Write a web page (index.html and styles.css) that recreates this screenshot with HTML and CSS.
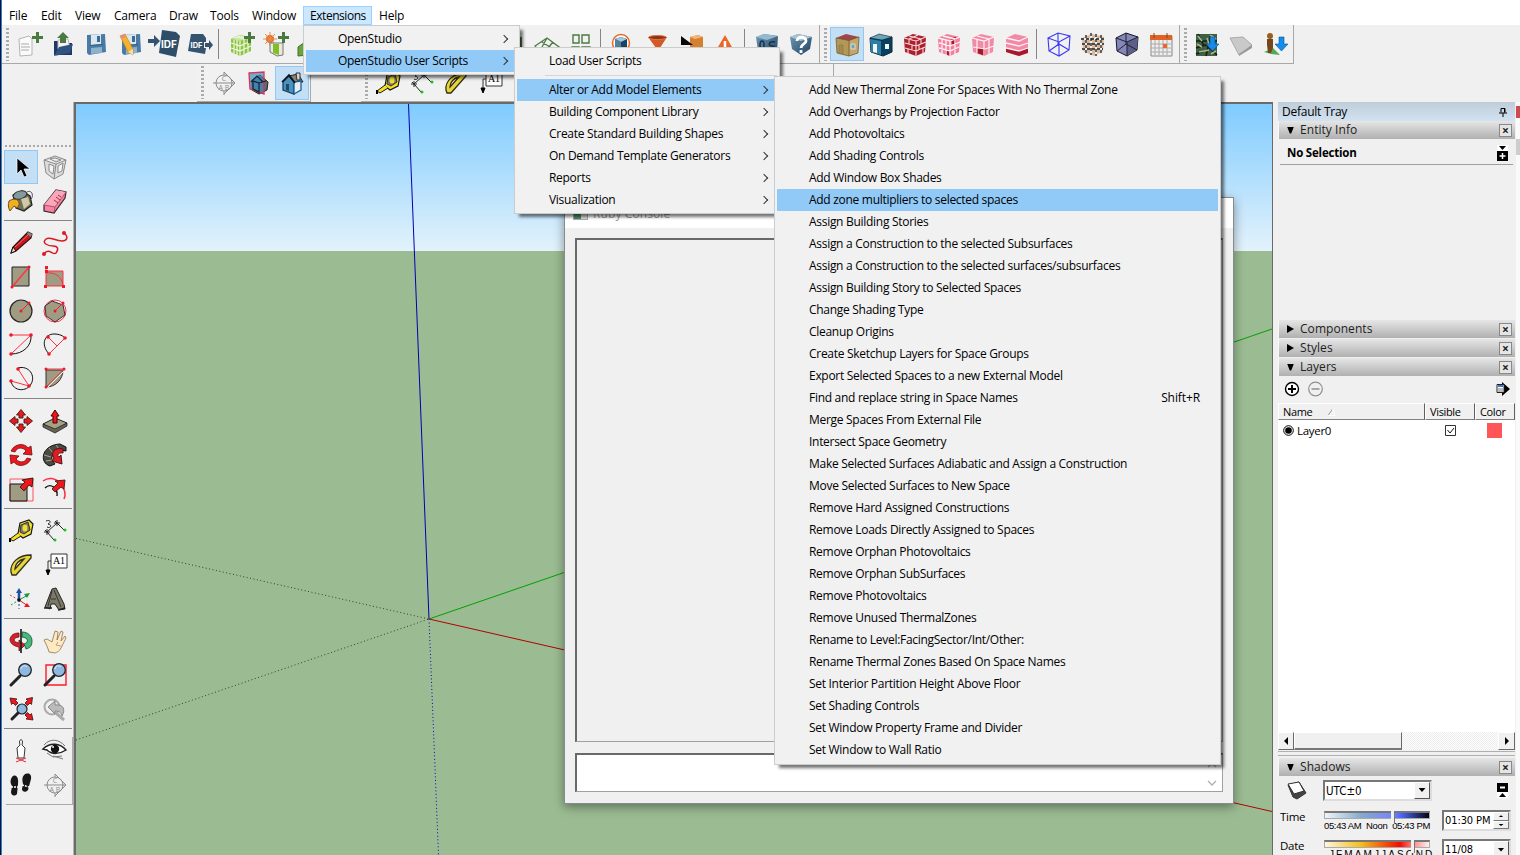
FILE: index.html
```html
<!DOCTYPE html>
<html lang="en">
<head>
<meta charset="utf-8">
<title>Model editor</title>
<link rel="stylesheet" href="styles.css">
</head>
<body>
<svg class="defs" width="0" height="0">
  <defs>
    <linearGradient id="steel" x1="0" y1="0" x2="1" y2="1"><stop offset="0" stop-color="#6f9cb9"/><stop offset="1" stop-color="#1f3f5c"/></linearGradient>
    <symbol id="plus" viewBox="0 0 28 28"><path d="M21 2h3v4h4v3h-4v4h-3V9h-4V6h4z" fill="#4a7a40"/></symbol>
    <symbol id="new" viewBox="0 0 28 28"><path d="M4 9l10-3 3 3v16l-12 1z" fill="#fafafa" stroke="#b5b5b5"/><path d="M6 14h8M6 17h9M6 20h8" stroke="#aaa"/><use href="#plus"/></symbol>
    <symbol id="open" viewBox="0 0 28 28"><path d="M5 11h4l2 2h12v12H5z" fill="#1f3864"/><path d="M9 10l10-1 2 10H9z" fill="#f4f4f4" stroke="#bbb"/><path d="M5 26l5-9 14-3-3 9z" fill="#305482"/><path d="M14 2l6 6h-3v5h-6V8H8z" fill="#4a7a40"/></symbol>
    <symbol id="save" viewBox="0 0 28 28"><path d="M4 5l18-1 1 18-17 3-2-2z" fill="#4a7ba5"/><path d="M8 5l10-1v10l-10 1z" fill="#dbe7ef"/><path d="M14 6h3v6h-3z" fill="#3c6a92"/><path d="M8 18l11-1v6l-11 1z" fill="#8fb2cc"/><path d="M7 15.500l13-1" stroke="#315f88"/></symbol>
    <symbol id="saveas" viewBox="0 0 28 28"><use href="#save" x="1"/><path d="M3 6l5-2 8 15v6l-5-3z" fill="#f6b22c" stroke="#c28111" stroke-width=".6"/><path d="M11 22l5-3v6z" fill="#f4dfb5"/><path d="M3 6l5-2 1 3-4 2z" fill="#ec8b85"/></symbol>
    <symbol id="export" viewBox="0 0 28 28"><path d="M6 4h12l3 4v4h-2v6h2l-1 6-17-3z" fill="#34536f"/><path d="M20 13h4v-3l4 5-4 5v-3h-4z" fill="#34536f"/></symbol>
    <symbol id="import" viewBox="0 0 34 30"><path d="M14 1l14 2 4 4-4 21-17-4z" fill="#2d4d69"/><path d="M0 10h6V6l6 6-6 6v-4H0z" fill="#34536f"/></symbol>
    <symbol id="gcube" viewBox="0 0 28 28"><path d="M4 9l8-4 12 2v14l-11 5-9-4z" fill="#8cc63f"/><path d="M4 9l9 2 11-4-12-2z" fill="#c6e29b"/><path d="M13 11v15M7 10v13M10 10v15M17 9v15M21 8v15M4 13l9 3 11-5M4 18l9 3 11-5M7 7l12 2M10 6l11 2" stroke="#f0f5e5" stroke-width="1.2" fill="none"/><use href="#plus"/></symbol>
    <symbol id="sunbox" viewBox="0 0 28 28"><circle cx="9" cy="9" r="4" fill="#e36c20"/><path d="M2 9h14M9 2v14M4 4l10 10M14 4L4 14" stroke="#e98d50"/><path d="M9 13h13v12l-6 1-7-4z" fill="#e9eadc" stroke="#777"/><path d="M12 14h6v11l-6-2z" fill="#80bd26"/><use href="#plus"/></symbol>
    <symbol id="leaf" viewBox="0 0 28 28"><path d="M3 17l10-7v15L3 26z" fill="#67a63b" stroke="#426f2a"/></symbol>
    <symbol id="gblock" viewBox="0 0 28 28"><path d="M14 7h9v15h-9z" fill="#4a7a40"/></symbol>
    <symbol id="roof" viewBox="0 0 28 28"><path d="M2 16l12-8 12 9-4 6-8-5-8 3zM9 12l11 7M14 8l-5 9M20 12l-5 6" fill="none" stroke="#4b7b40" stroke-width="1.3"/></symbol>
    <symbol id="tiles" viewBox="0 0 28 28"><path d="M6 5h6v8H6zM15 5h7v8h-7zM5 17h7v7H5zM15 17h8v7h-8z" fill="none" stroke="#4b7b40" stroke-width="1.4"/></symbol>
    <symbol id="cubering" viewBox="0 0 28 28"><circle cx="14" cy="13" r="8.500" fill="#fff" stroke="#e56a24" stroke-width="1.500"/><path d="M8 9l6-2 6 2v8l-6 4-6-3z" fill="#1e4262"/><path d="M8 9l6-2 6 2-6 3z" fill="#a2c6dc"/><path d="M8 9l6 3v9l-6-3z" fill="#52809f"/></symbol>
    <symbol id="funnel" viewBox="0 0 28 28"><path d="M5 7h19l-7 11v7h-4v-7z" fill="#d35a26"/><ellipse cx="14.500" cy="7.500" rx="9" ry="2" fill="#8c3516" stroke="#e37540"/></symbol>
    <symbol id="pickcube" viewBox="0 0 28 28"><path d="M13 7l8-2 5 2v14l-8 4-5-3z" fill="#d48032"/><path d="M13 7l8-2 5 2-8 2z" fill="#f2b677"/><path d="M4 6l12 9H4z" fill="#090909"/></symbol>
    <symbol id="warn" viewBox="0 0 28 28"><path d="M14 5l11 19H3z" fill="#ea6726"/><path d="M14 11v7M14 20v2" stroke="#fff" stroke-width="2.500"/></symbol>
    <symbol id="oscube" viewBox="0 0 28 28"><path d="M3 7l8-3 14 2-1 16-10 4-9-5z" fill="url(#steel)"/><path d="M3 7l8-3 14 2-11 4z" fill="#93bad1"/><ellipse cx="9" cy="15" rx="2" ry="4" fill="none" stroke="#162f49" stroke-width="1.500"/><path d="M22 12c-7-1-7 4-3 4s3 4-3 4" fill="none" stroke="#162f49" stroke-width="1.500"/></symbol>
    <symbol id="helpcube" viewBox="0 0 28 28"><path d="M3 7l8-3 14 3-2 12-9 6-9-6z" fill="url(#steel)"/><path d="M3 7l8-3 14 3-11 4z" fill="#a9c3d2"/><path d="M10 11c0-5 9-5 9 0 0 3-5 3-5 7M14 20v3" fill="none" stroke="#fff" stroke-width="2.800"/></symbol>
    <symbol id="tancube" viewBox="0 0 28 28"><path d="M3 8l13 2v16L4 23z" fill="#b39755"/><path d="M16 10l10-3-1 16-9 3z" fill="#c3a767"/><path d="M3 8l10-4 13 3-10 4z" fill="#a14549"/><path d="M3 8l13 2 10-3M16 10v16M4 23l12 3 9-3M3 8l1 15M26 7l-1 16" fill="none" stroke="#725d32" stroke-width=".8"/><path d="M6 15h4v9l-4-1z" fill="#a38b50" stroke="#8c7641" stroke-width=".6"/><path d="M18 14h4v5h-4z" fill="#68a6bd" stroke="#ddd"/></symbol>
    <symbol id="bluecube" viewBox="0 0 28 28"><path d="M3 8l12 2 10-3v15l-9 4-12-4z" fill="#08415f" stroke="#123"/><path d="M3 8l9-4 13 3-10 3z" fill="#68a8bd" stroke="#123" stroke-width=".6"/><path d="M3 9l11 2v14L4 22z" fill="#2b7fa6"/><path d="M6 14h4v9l-4-1zM18 14h4v5h-4z" fill="#eef6f8"/></symbol>
    <symbol id="brick" viewBox="0 0 28 28"><path d="M3 8l9-4 13 3-1 15-9 4-11-4z" fill="#a9212f"/><path d="M3 8l12 3 10-4M4 13l11 3 10-4M4 18l11 3 9-4M15 11v15M8 9v5M11 15v5M7 19v5M20 9v5M18 15v5M22 18v5M8 6l12 3M8 9l9-4" fill="none" stroke="#ffd8d8" stroke-width="1.100"/></symbol>
    <symbol id="pink1" viewBox="0 0 28 28"><path d="M3 8l9-4 13 3-1 15-9 4-11-4z" fill="#f27f9d"/><path d="M16 8l5-1v7l-4 1zM10 20l5 1v5l-5-2z" fill="#b6132b"/><path d="M3 8l12 3 10-4M4 13l11 3 10-4M4 18l11 3 9-4M15 11v15M7 9v14M11 10v15M20 9v15M8 6l12 3" fill="none" stroke="#fff1f3" stroke-width="1.300"/></symbol>
    <symbol id="pink2" viewBox="0 0 28 28"><path d="M3 8l9-4 13 3-1 15-9 4-11-4z" fill="#f18aa6"/><path d="M8 18l8 1v7l-8-3z" fill="#a9172a"/><path d="M3 8l12 3 10-4M4 17l12 2 9-3M15 11v15M8 9v14M20 9v15M8 6l12 3" fill="none" stroke="#fff1f3" stroke-width="1.200"/></symbol>
    <symbol id="pink3" viewBox="0 0 28 28"><path d="M3 8l9-4 13 3v15l-9 4-13-4z" fill="#f18aa6"/><path d="M3 18l13 3 9-3v5l-9 3-13-4z" fill="#a9172a"/><path d="M3 8l13 3 9-4M3 13l13 3 9-3M3 18l13 3 9-3" fill="none" stroke="#fff1f3" stroke-width="1.300"/></symbol>
    <symbol id="wire" viewBox="0 0 28 28"><path d="M3 8l10-5 12 3-1 14-10 6-10-5zM3 8l11 4 11-6M14 12v14M4 21l10-7 10 6M13 3v12" fill="none" stroke="#3a3af2" stroke-width="1.100"/></symbol>
    <symbol id="tanwire" viewBox="0 0 28 28"><path d="M3 8l10-4 12 3-1 14-9 5-11-5z" fill="#dbb899"/><path d="M2 9h24M3 14h22M3 19h21M7 5v18M12 3v22M17 4v22M22 5v18" stroke="#f0f0f0" stroke-width="2"/><path d="M2 9h24M3 14h22M3 19h21M7 5v18M12 3v22M17 4v22M22 5v18" stroke="#151515" stroke-width="1.300" stroke-dasharray="3 2"/></symbol>
    <symbol id="purple" viewBox="0 0 28 28"><path d="M3 8l10-5 12 4-1 13-10 6-10-5z" fill="#8587b8" stroke="#171725"/><path d="M14 12l11-5-1 13-10 6z" fill="#5c5f86"/><path d="M3 8l11 4 11-5M14 12v14M4 21l9-7 11 6M13 3v11" fill="none" stroke="#202033"/></symbol>
    <symbol id="calendar" viewBox="0 0 28 28"><path d="M4 6h21v20H4z" fill="#eee" stroke="#888"/><path d="M3 5h22v5H3z" fill="#e16324"/><path d="M7 3v5M20 3v5" stroke="#7b4930"/><path d="M4 14h20M4 18h20M4 22h20M8 10v15M12 10v15M16 10v15M20 10v15" stroke="#aaa"/><path d="M16 14h4v4h-4z" fill="#ee632b"/></symbol>
    <symbol id="down" viewBox="0 0 28 28"><path d="M17 7h5v7h4l-6.500 7-6.500-7h4z" fill="#168be9" stroke="#07589c" stroke-width=".6"/></symbol>
    <symbol id="map" viewBox="0 0 28 28"><path d="M3 4h21v22H3z" fill="#3f6042"/><path d="M3 18l10-3 11 10M5 4l6 12M18 4l-5 22M3 11h21M3 24l8-3" fill="none" stroke="#161e19" stroke-width="1.600"/><path d="M5 6l4 5M17 5l6 4M6 22l10-2M4 14l5 3M14 8l2 6M18 24l5-3" stroke="#a9b98a" stroke-width="1.600"/><use href="#down"/></symbol>
    <symbol id="terrain" viewBox="0 0 28 28"><path d="M3 8l13-1 9 8-13 10z" fill="#c9c9c9" stroke="#aaa"/><path d="M25 15v3L12 26v-2z" fill="#999"/></symbol>
    <symbol id="person" viewBox="0 0 28 28"><path d="M3 22l9-4 7 7-9-1z" fill="#55a956"/><circle cx="9" cy="6" r="3" fill="#9a5d21"/><path d="M6 9h6v9l-2 5H7l-1-8z" fill="#76471d"/><use href="#down" x="1"/></symbol>
    <symbol id="section" viewBox="0 0 28 28"><g fill="none" stroke="#8b8b8b"><circle cx="14" cy="14" r="8"/><path d="M3 14h22M14 3v3M14 22v4M14 3l11 11-11 11" /></g><text x="14" y="12" text-anchor="middle" font-size="7" fill="#8b8b8b">C</text><text x="14" y="21" text-anchor="middle" font-size="7" fill="#8b8b8b">A B</text></symbol>
    <symbol id="house" viewBox="0 0 28 28"><path d="M5 13l6-6 5 6v12l-11-4z" fill="#4a91bd" stroke="#16405f" stroke-width="1.300"/><path d="M11 7l9-2 5 8h-9z" fill="#858074" stroke="#222"/><path d="M16 13l7-1v9l-7 4z" fill="#e8eef1" stroke="#17619a" stroke-width="1.300"/><path d="M18 4h4v7h-3z" fill="#d5d5d2" stroke="#333"/><path d="M4 13l7-7 6 8" fill="none" stroke="#111" stroke-width="1.600"/><path d="M8 15h3v7l-3-1z" fill="#1d4a6b"/></symbol>
    <symbol id="cuthouse" viewBox="0 0 28 28"><path d="M8 11l8-5 8 7-1 8-8 4-7-4z" fill="#5a6a72" stroke="#222"/><path d="M5 4l15-1v22L6 20z" fill="#3b8cc4" fill-opacity=".7" stroke="#e0304d" stroke-width="1.300"/><path d="M7 13l6-6 6 6M9 12v8l6 3v-9l-6-2M15 14l7-2" fill="none" stroke="#15222b" stroke-width="1.200"/></symbol>
    <symbol id="tape" viewBox="0 0 28 28"><path d="M13 6l9-3 4 4-2 10-8 4-5-4z" fill="#f4df27" stroke="#161616" stroke-width="1.200"/><path d="M14 8l7-3 2 8-6 4-4-2z" fill="#777" stroke="#333"/><ellipse cx="18" cy="11" rx="2.500" ry="3.500" fill="#f3df26"/><path d="M11 16l-8 6 3 2 8-5" fill="#f6df1d" stroke="#191919"/><path d="M3 21v4" stroke="#000" stroke-width="2"/></symbol>
    <symbol id="dim" viewBox="0 0 28 28"><path d="M6 15L16 6M6 15l7 8M16 6l7 7M3 15h6M6 12v6M13 6h6M16 3v6M4 13l4 4M14 4l4 4" stroke="#222" fill="none"/><path d="M5 4c5-2 5 2 2 3 5 1 2 5-1 3" fill="none" stroke="#222"/><circle cx="14" cy="23" r="1.500" fill="#20be27"/><circle cx="24" cy="13" r="1.500" fill="#20be27"/></symbol>
    <symbol id="protractor" viewBox="0 0 28 28"><path fill-rule="evenodd" d="M4 21C3 12 11 4 24 4v3L9 24H5zM8 18l9-10C12 9 8 13 8 18z" fill="#e6d63c" stroke="#342f13" stroke-width="1.300"/></symbol>
    <symbol id="label" viewBox="0 0 28 28"><path d="M10 3h16v14H10z" fill="#fff" stroke="#333"/><text x="18" y="13" font-size="10" font-family="Liberation Serif" text-anchor="middle">A1</text><path d="M10 10H7v12" fill="none" stroke="#333"/><path d="M5 19h4l-2 5z" stroke="#000"/></symbol>
    <symbol id="cursor" viewBox="0 0 28 28"><path d="M10 5v16l4-4 3 7 3-1-3-7h6z" fill="#000" stroke="#fff" stroke-width=".7"/></symbol>
    <symbol id="graycube" viewBox="0 0 28 28"><path d="M3 7l11-4 11 4-3 14-9 5-8-6z" fill="#dcdcdc" stroke="#8a8a8a"/><path d="M3 7l12 4 10-4M15 11l-2 15M8 11l5 2-1 8-4-3zM17 13l5-3-1 8-4 2zM9 6l5-1 6 2-5 2z" fill="#f4f4f4" stroke="#8a8a8a"/></symbol>
    <symbol id="paint" viewBox="0 0 28 28"><path d="M6 8l9-4 8 5 2 9-8 6-8-3z" fill="#746e57" stroke="#222" stroke-width="1.200"/><ellipse cx="13" cy="8" rx="7" ry="4" fill="#839b9e" stroke="#333" transform="rotate(-15 13 8)"/><path d="M14 12l7-2 2 7-6 5z" fill="#d0c9a5"/><path d="M2 14c6-4 11-1 10 4l-2 3-3-2-4 5c-2-3-2-7-1-10z" fill="#f2ae1b" stroke="#6b5428"/><path d="M20 5c6-3 7 6 3 8" fill="none" stroke="#555"/></symbol>
    <symbol id="eraser" viewBox="0 0 28 28"><path d="M3 18L15 3l10 2-1 6-11 15-10-2z" fill="#f783a0" stroke="#33282b" stroke-width="1.200"/><path d="M3 18l11 2L25 5l-10-2z" fill="#fba6b9"/><path d="M3 18l11 2L25 5M14 20l-1 5" fill="none" stroke="#ac5370"/><path d="M13 13l4 3M15 10l4 3M17 8l3 2" stroke="#a02c48"/></symbol>
    <symbol id="pencil" viewBox="0 0 28 28"><path d="M4 24l2-6L21 3l4 2-1 4L9 22z" fill="#c9151c" stroke="#291213" stroke-width="1.100"/><path d="M4 24l2-6 3 4z" fill="#f4dfb5" stroke="#111"/><path d="M8 18L21 6" stroke="#ed6b69"/><path d="M21 3l4 2-1 3-4-3z" fill="#878787"/></symbol>
    <symbol id="freehand" viewBox="0 0 28 28"><path d="M23 4c5 4 3 8-2 8-7 0-12-5-16-2-5 4 2 7 7 7s6 3 3 7c-3 3-7-6-12 1" fill="none" stroke="#d51b25" stroke-width="1.500"/><circle cx="23" cy="4" r="2" fill="#e41625"/><circle cx="3" cy="25" r="2" fill="#e41625"/></symbol>
    <symbol id="rect" viewBox="0 0 28 28"><path d="M5 4h17v19H5z" fill="#a09c84" stroke="#222"/><path d="M5 24L22 4" stroke="#ff3548" stroke-width="1.500"/><circle cx="5" cy="24" r="1.500" fill="#ed1829"/><circle cx="22" cy="4" r="1.500" fill="#ed1829"/></symbol>
    <symbol id="rrect" viewBox="0 0 28 28"><path d="M5 8h17v15H5z" fill="#a09c84"/><path d="M5 4v19h17V8H5M5 10c10-1 16 4 17 13" fill="none" stroke="#ff3045"/><path d="M4 3h3v3H4zM4 7h3v3H4zM3 22h3v3H3zM21 22h3v3h-3z" fill="#ed1829"/></symbol>
    <symbol id="circle" viewBox="0 0 28 28"><circle cx="14" cy="14" r="11" fill="#a09c84" stroke="#282820" stroke-width="1.200"/><path d="M14 14l8-8" stroke="#f42336"/><circle cx="14" cy="14" r="1.500" fill="#ed1829"/><circle cx="22" cy="6" r="1.500" fill="#ed1829"/></symbol>
    <symbol id="polygon" viewBox="0 0 28 28"><circle cx="14" cy="14" r="11" fill="none" stroke="#ff3045"/><path d="M11 4l11 4 2 10-10 7-9-6-1-10z" fill="#a09c84" stroke="#333"/><path d="M14 14l8-8" stroke="#f42336"/><circle cx="14" cy="14" r="1.500" fill="#ed1829"/><circle cx="22" cy="6" r="1.500" fill="#ed1829"/></symbol>
    <symbol id="arc1" viewBox="0 0 28 28"><path d="M4 4h20L4 23" fill="none" stroke="#ff3144"/><path d="M24 4c1 11-8 19-20 19" fill="none" stroke="#111"/><circle cx="4" cy="4" r="1.800" fill="#ed1829"/><circle cx="24" cy="4" r="1.800" fill="#ed1829"/><circle cx="4" cy="23" r="1.800" fill="#ed1829"/></symbol>
    <symbol id="arc2" viewBox="0 0 28 28"><path d="M8 23C-1 13 4 3 13 3c6 0 9 2 11 4" fill="none" stroke="#111"/><path d="M8 23L24 7M7 6l9 9" stroke="#ff3144"/><circle cx="8" cy="23" r="1.800" fill="#ed1829"/><circle cx="24" cy="7" r="1.800" fill="#ed1829"/><circle cx="7" cy="6" r="1.800" fill="#ed1829"/></symbol>
    <symbol id="arc3" viewBox="0 0 28 28"><path d="M11 3c11-3 18 8 13 16-4 8-18 8-20-3" fill="none" stroke="#111"/><path d="M11 4l11 17-18-5" fill="none" stroke="#ff3144"/><circle cx="11" cy="4" r="1.800" fill="#ed1829"/><circle cx="22" cy="21" r="1.800" fill="#ed1829"/><circle cx="4" cy="16" r="1.800" fill="#ed1829"/></symbol>
    <symbol id="pie" viewBox="0 0 28 28"><path d="M5 5h17C22 14 15 22 5 22z" fill="#a09c84" stroke="#333"/><path d="M5 4h18L5 22" fill="none" stroke="#ff3144"/><path d="M6 23L24 5" stroke="#eee"/><circle cx="5" cy="4" r="1.500" fill="#ed1829"/><circle cx="23" cy="4" r="1.500" fill="#ed1829"/><circle cx="5" cy="22" r="1.500" fill="#ed1829"/></symbol>
    <symbol id="move" viewBox="0 0 28 28"><path id="ma" d="M14 2.500l4.500 5.500h-2.500v3h-4V8H9.500z" fill="#f1161e" stroke="#321" stroke-width=".9"/><use href="#ma" transform="rotate(90 14 14)"/><use href="#ma" transform="rotate(180 14 14)"/><use href="#ma" transform="rotate(270 14 14)"/></symbol>
    <symbol id="push" viewBox="0 0 28 28"><path d="M2 17l12-6 12 5-12 8z" fill="#a5a187" stroke="#222"/><path d="M2 17l12 5 12-6v3l-12 7-12-6z" fill="#66634f" stroke="#222" stroke-width=".8"/><path d="M14 3l4 6h-2v7h-4V9h-2z" fill="#f1161e" stroke="#400"/></symbol>
    <symbol id="rotate" viewBox="0 0 28 28"><path id="ra" d="M4 10c4-8 14-8 17-3l3-2 1 9-9-1 3-3c-3-4-9-4-11 1z" fill="#f1161e" stroke="#611" stroke-width=".8"/><use href="#ra" transform="rotate(180 14 14)"/></symbol>
    <symbol id="follow" viewBox="0 0 28 28"><path d="M9 25C-2 22 0 4 19 3l6 3v4c-9-2-15 2-14 9l3 4z" fill="#4a4a42" stroke="#111"/><path d="M8 7l4 5M3 14l7 2M15 4l3 4M5 20l6-1" stroke="#a8a590"/><path d="M22 8c-8-2-13 3-9 9l-2 3 10 3-1-9-2 2c-3-2 0-5 4-4z" fill="#df1d25" stroke="#511"/></symbol>
    <symbol id="scale" viewBox="0 0 28 28"><path d="M3 4h23v22H3z" fill="none" stroke="#ff5060"/><path d="M3 9h17v17H3z" fill="#a09c84" stroke="#111"/><path d="M26 3l-1 9-3-2-5 6-4-4 5-5-3-2z" fill="#f1161e" stroke="#321"/></symbol>
    <symbol id="offset" viewBox="0 0 28 28"><path d="M2 6c12-9 26 8 21 18" fill="none" stroke="#ff3045" stroke-width="1.500"/><path d="M4 13c6-6 13 1 12 8" fill="none" stroke="#111" stroke-width="1.400"/><path d="M24 5l-1 9-3-2-6 5-3-3 6-6-3-2z" fill="#f1161e" stroke="#321" stroke-width=".9"/></symbol>
    <symbol id="axes" viewBox="0 0 28 28"><path d="M12 15V7" stroke="#1b52a6" stroke-width="2.500"/><path d="M12 15l9-5" stroke="#1b983c"/><path d="M12 15l9 6" stroke="#e31b24"/><path d="M12 3l3 5H9z" fill="#1b52a6"/><path d="M23 8l-3 5-3-4z" fill="#1b983c"/><path d="M23 22l-6 0 3-4z" fill="#e31b24"/><path d="M3 10l9 5" stroke="#d44" stroke-dasharray="2 2"/><path d="M4 20l8-5" stroke="#1b983c" stroke-dasharray="2 2"/><path d="M12 15v9" stroke="#1b52a6" stroke-dasharray="2 2"/><circle cx="12" cy="15" r="1.800" fill="#111"/></symbol>
    <symbol id="text3d" viewBox="0 0 28 28"><path d="M4 22l7-18 4-1 8 16 1 5-6 1-4-6h-4l-1 5z" fill="#7c7968" stroke="#222"/><path d="M11 6l-4 15M13 5l7 17M10 14h5" stroke="#38362e"/><path d="M3 23h8M17 25l7-2" stroke="#222" stroke-width="1.500"/></symbol>
    <symbol id="orbit" viewBox="0 0 28 28"><path d="M3 12c1-4 4-6 9-6v4c-7 1-6 5 0 6v-3l6 5-6 6v-4c-6-1-9-4-9-8z" fill="#d72028" stroke="#611" stroke-width=".8"/><path d="M15 5c6 0 10 4 10 9s-2 7-6 8l-2-5c5-2 5-6-2-7z" fill="#45b87b" stroke="#164b2b" stroke-width=".8"/><path d="M14 2v24" stroke="#222" stroke-width="1.700"/></symbol>
    <symbol id="pan" viewBox="0 0 28 28"><path d="M3 13l3-1 5 3 3-11 3 1-1 8 4-9 2 1-2 9 4-5 1 2-5 10c-2 4-4 4-6 5l-6-1c-1-4-3-8-5-12z" fill="#ffe9c2" stroke="#8a7454" stroke-width=".8"/><path d="M17 15l-2 3 5 1" fill="none" stroke="#bda079"/></symbol>
    <symbol id="zoom" viewBox="0 0 28 28"><path d="M4 24l9-9" stroke="#222" stroke-width="3" stroke-linecap="round"/><circle cx="18" cy="9" r="6.300" fill="#8db9e1" stroke="#222" stroke-width="1.300"/><path d="M14 8c1-4 4-4 6-2" fill="none" stroke="#dff3ff"/></symbol>
    <symbol id="zoomwin" viewBox="0 0 28 28"><path d="M5 4h20v20H5z" fill="none" stroke="#fb1b2b" stroke-width="1.400"/><use href="#zoom"/></symbol>
    <symbol id="extents" viewBox="0 0 28 28"><path d="M5 24l7-7" stroke="#222" stroke-width="3" stroke-linecap="round"/><circle cx="15" cy="14" r="5" fill="#8db9e1" stroke="#222" stroke-width="1.200"/><path id="xa" d="M3 3l7 1-1.500 1.500 2.500 2.500-2.500 2.500-2.500-2.500L4.500 9.500z" fill="#f1161e" stroke="#311" stroke-width=".8"/><use href="#xa" transform="rotate(90 14.500 14)"/><use href="#xa" transform="rotate(180 14.500 14)"/></symbol>
    <symbol id="previous" viewBox="0 0 28 28"><circle cx="11" cy="12" r="7.500" fill="none" stroke="#aaa" stroke-width="2"/><path d="M7 12l7-6v4c8-1 11 4 7 11-1-4-3-5-7-5v3z" fill="#bbb" stroke="#888"/><path d="M15 18l8 7" stroke="#aaa" stroke-width="3"/></symbol>
    <symbol id="walker" viewBox="0 0 28 28"><path d="M12.500 5c0-3 3-3 3 0l-.5 3 3 3-1 10h-6l-1-10 3-3z" fill="#fff" stroke="#222" stroke-width=".9"/><path d="M9 25l10-4M9 21l10 4" stroke="#f42a36"/></symbol>
    <symbol id="eye" viewBox="0 0 28 28"><path d="M2 12c7-7 17-6 23 1-6 4-14 5-19 0z" fill="#fff" stroke="#222" stroke-width="1.500"/><circle cx="14" cy="12" r="4.200" fill="#111"/><circle cx="12" cy="10" r="1" fill="#fff"/><path d="M3 8C9 1 18 2 24 9M12 19l10 3M6 16l6 4 9-1" fill="none" stroke="#777"/></symbol>
    <symbol id="feet" viewBox="0 0 28 28"><path d="M5 6c4-4 7 1 6 7l-1 10c-3 3-6 1-6-2l1-6c-2-3-2-6 0-9zM17 4c4-3 8-1 7 4l-3 11c-2 3-6 2-6-1l1-5c-1-4-1-7 1-9z" fill="#171717"/><path d="M4 16h7M15 14l7 2" stroke="#fff" stroke-width="1.500" stroke-dasharray="2 1"/></symbol>
  </defs>
</svg>

<div class="app">
  <nav class="menubar">
    <span class="mi file">File</span><span class="mi edit">Edit</span><span class="mi view">View</span><span class="mi camera">Camera</span><span class="mi draw">Draw</span><span class="mi tools">Tools</span><span class="mi window">Window</span><span class="mi ext">Extensions</span><span class="mi help">Help</span>
  </nav>

  <div class="row row1">
    <div class="bar">
      <i class="grip"></i>
      <svg class="ic"><use href="#new"/></svg><svg class="ic"><use href="#open"/></svg><svg class="ic"><use href="#save"/></svg><svg class="ic"><use href="#saveas"/></svg>
      <svg class="ic wide" viewBox="0 0 34 30"><use href="#import"/><text x="21" y="19" class="idf">IDF</text></svg>
      <svg class="ic" viewBox="0 0 28 28"><use href="#export"/><text x="11.500" y="17.500" class="idf small">IDF</text></svg>
      <i class="sep"></i>
      <svg class="ic"><use href="#gcube"/></svg><svg class="ic"><use href="#sunbox"/></svg><svg class="ic"><use href="#leaf"/></svg><i class="hiddentools"></i><svg class="ic"><use href="#gblock"/></svg><svg class="ic"><use href="#roof"/></svg><svg class="ic"><use href="#tiles"/></svg>
      <i class="sep"></i>
      <svg class="ic"><use href="#cubering" x="-2"/></svg><svg class="ic"><use href="#funnel"/></svg><svg class="ic"><use href="#pickcube"/></svg><svg class="ic"><use href="#warn"/></svg>
      <i class="sep"></i>
      <svg class="ic"><use href="#oscube"/></svg><svg class="ic"><use href="#helpcube"/></svg>
    </div>
    <div class="bar">
      <i class="grip"></i>
      <svg class="ic on"><use href="#tancube"/></svg><svg class="ic"><use href="#bluecube"/></svg><svg class="ic"><use href="#brick"/></svg><svg class="ic"><use href="#pink1"/></svg><svg class="ic"><use href="#pink2"/></svg><svg class="ic"><use href="#pink3"/></svg>
      <i class="sep"></i>
      <svg class="ic"><use href="#wire"/></svg><svg class="ic"><use href="#tanwire"/></svg><svg class="ic"><use href="#purple"/></svg><svg class="ic"><use href="#calendar"/></svg>
    </div>
    <div class="bar">
      <i class="grip"></i>
      <svg class="ic"><use href="#map"/></svg><svg class="ic"><use href="#terrain"/></svg><svg class="ic"><use href="#person"/></svg>
    </div>
  </div>

  <div class="row row2">
    <div class="bar">
      <i class="grip"></i>
      <svg class="ic"><use href="#section"/></svg><svg class="ic"><use href="#cuthouse"/></svg><svg class="ic on"><use href="#house"/></svg>
    </div>
    <div class="bar construction">
      <i class="grip"></i>
      <svg class="ic"><use href="#tape"/></svg><svg class="ic"><use href="#dim"/></svg><svg class="ic"><use href="#protractor"/></svg><svg class="ic"><use href="#label"/></svg>
    </div>
  </div>

  <main class="main">
    <aside class="palette">
      <i class="hgrip"></i>
      <div class="pgroup"><svg class="ic on"><use href="#cursor"/></svg><svg class="ic"><use href="#graycube"/></svg><svg class="ic"><use href="#paint"/></svg><svg class="ic"><use href="#eraser"/></svg></div>
      <div class="pgroup"><svg class="ic"><use href="#pencil"/></svg><svg class="ic"><use href="#freehand"/></svg><svg class="ic"><use href="#rect"/></svg><svg class="ic"><use href="#rrect"/></svg><svg class="ic"><use href="#circle"/></svg><svg class="ic"><use href="#polygon"/></svg><svg class="ic"><use href="#arc1"/></svg><svg class="ic"><use href="#arc2"/></svg><svg class="ic"><use href="#arc3"/></svg><svg class="ic"><use href="#pie"/></svg></div>
      <div class="pgroup"><svg class="ic"><use href="#move"/></svg><svg class="ic"><use href="#push"/></svg><svg class="ic"><use href="#rotate"/></svg><svg class="ic"><use href="#follow"/></svg><svg class="ic"><use href="#scale"/></svg><svg class="ic"><use href="#offset"/></svg></div>
      <div class="pgroup"><svg class="ic"><use href="#tape"/></svg><svg class="ic"><use href="#dim"/></svg><svg class="ic"><use href="#protractor"/></svg><svg class="ic"><use href="#label"/></svg><svg class="ic"><use href="#axes"/></svg><svg class="ic"><use href="#text3d"/></svg></div>
      <div class="pgroup"><svg class="ic"><use href="#orbit"/></svg><svg class="ic"><use href="#pan"/></svg><svg class="ic"><use href="#zoom"/></svg><svg class="ic"><use href="#zoomwin"/></svg><svg class="ic"><use href="#extents"/></svg><svg class="ic"><use href="#previous"/></svg></div>
      <div class="pgroup"><svg class="ic"><use href="#walker"/></svg><svg class="ic"><use href="#eye"/></svg><svg class="ic"><use href="#feet"/></svg><svg class="ic"><use href="#section"/></svg></div>
    </aside>

    <section class="viewport">
      <svg class="scene" viewBox="76 104 1196 751">
        <path d="M408.500 104L429 619" stroke="#0000b4"/>
        <path d="M429 619L438.500 855" stroke="#0000c8" stroke-dasharray="1 2.500"/>
        <path d="M429 619L1272 329" stroke="#00a000"/>
        <path d="M429 619L1272 811.500" stroke="#b40000"/>
        <path d="M76 538.500L429 619M76 740L429 619" stroke="#30402c" stroke-dasharray="1 2.500"/>
      </svg>
      <div class="console">
        <div class="ctitle"><i class="cicon"></i>Ruby Console</div>
        <div class="cbody"><div class="cout"></div><div class="cin"><svg width="10" height="34"><path d="M1 12l4-4 4 4M1 26l4 4 4-4" fill="none" stroke="#b0b0b0" stroke-width="1.300"/></svg></div></div>
      </div>
    </section>

    <aside class="tray">
      <div class="traytitle"><span>Default Tray</span><svg width="8" height="10"><path d="M2 5.500v-4h4v4M0 6h8M4 6v4M5.500 1.500v4" fill="none" stroke="#000"/></svg></div>
      <div class="phead"><i class="tri open"></i><span>Entity Info</span><i class="close">×</i></div>
      <div class="entity"><div class="nosel"><b>No Selection</b><svg width="11" height="16"><path d="M0 0h11v16H0z" fill="#fff"/><path d="M2 1h7L5.500 5z"/><path d="M0 6h11v10H0z"/><path d="M5.500 8v6M2.500 11h6" stroke="#fff" stroke-width="1.500"/></svg></div></div>
      <div class="phead"><i class="tri"></i><span>Components</span><i class="close">×</i></div>
      <div class="phead"><i class="tri"></i><span>Styles</span><i class="close">×</i></div>
      <div class="phead"><i class="tri open"></i><span>Layers</span><i class="close">×</i></div>
      <div class="ltools">
        <svg width="40" height="16"><circle cx="8" cy="8" r="6.500" fill="#fff" stroke="#000" stroke-width="1.400"/><path d="M8 4v8M4 8h8" stroke="#000" stroke-width="2"/><circle cx="31.500" cy="8" r="6.800" fill="none" stroke="#909090" stroke-width="1.200"/><path d="M27.500 8h8" stroke="#909090" stroke-width="1.500"/></svg>
        <svg width="14" height="16"><path d="M1 3h5V1l8 7-8 7v-3H1z"/><path d="M1 3.500h7v8H1z" fill="#fff" stroke="#222"/><path d="M2 4h5v2H2z" fill="#317bd8"/><path d="M2 8h5M2 10h5" stroke="#777"/></svg>
      </div>
      <div class="lhead"><span class="c1">Name<svg width="8" height="7"><path d="M0 6.500L4.500 0" stroke="#999"/><path d="M4.500 0L7 6.500H0" fill="none" stroke="#fff"/></svg></span><span class="c2">Visible</span><span class="c3">Color</span></div>
      <div class="llist">
        <div class="lrow"><svg width="11" height="11"><circle cx="5.500" cy="5.500" r="4.800" fill="#fff" stroke="#000"/><circle cx="5.500" cy="5.500" r="3.300"/></svg><span>Layer0</span><svg class="check" width="12" height="12"><path d="M.5.500h10v10H.500z" fill="#fff" stroke="#333"/><path d="M2.500 5l2.500 3L9 3" fill="none" stroke="#111"/></svg><i class="swatch"></i></div>
      </div>
      <div class="hscroll"><i class="sbtn l"></i><i class="thumb"></i><i class="sbtn r"></i></div>
      <div class="splitter"></div>
      <div class="phead shadowhead"><i class="tri open"></i><span>Shadows</span><i class="close">×</i></div>
      <div class="utc">
        <svg width="20" height="19"><path d="M1 4l11-3 7 11-9 6-4-2z" fill="#444" stroke="#333"/><path d="M1 3l11-2 5 9-10 3z" fill="#fff" stroke="#333"/></svg>
        <div class="combo"><span>UTC±0</span><i class="drop"></i></div>
        <svg class="toggle" width="11" height="15"><path d="M0 0h11v15H0z" fill="#fff"/><path d="M0 0h11v9H0z"/><path d="M3 4.500h5" stroke="#fff" stroke-width="2"/><path d="M2 14l3.500-4L9 14z"/></svg>
      </div>
      <div class="srow"><label>Time</label><div class="slider"><div class="track time"></div><div class="ticks"><span>05:43 AM</span><span>Noon</span><span>05:43 PM</span></div><i class="knob k1"></i></div><div class="combo spin"><span>01:30 PM</span><i class="updown"><b></b><b></b></i></div></div>
      <div class="srow date"><label>Date</label><div class="slider"><div class="track year"></div><div class="months"><span>J</span><span>F</span><span>M</span><span>A</span><span>M</span><span>J</span><span>J</span><span>A</span><span>S</span><span>O</span><span>N</span><span>D</span></div><i class="knob k2"></i></div><div class="combo spin"><span>11/08</span><i class="drop"></i></div></div>
    </aside>
    <div class="gutter"><i class="redx"></i><i class="gthumb"></i></div>
  </main>

  <ul class="menu m1">
    <li class="sub">OpenStudio</li>
    <li class="sub sel">OpenStudio User Scripts</li>
  </ul>
  <ul class="menu m2">
    <li>Load User Scripts</li>
    <li class="rule"></li>
    <li class="sub sel">Alter or Add Model Elements</li>
    <li class="sub">Building Component Library</li>
    <li class="sub">Create Standard Building Shapes</li>
    <li class="sub">On Demand Template Generators</li>
    <li class="sub">Reports</li>
    <li class="sub">Visualization</li>
  </ul>
  <ul class="menu m3">
    <li>Add New Thermal Zone For Spaces With No Thermal Zone</li>
    <li>Add Overhangs by Projection Factor</li>
    <li>Add Photovoltaics</li>
    <li>Add Shading Controls</li>
    <li>Add Window Box Shades</li>
    <li class="sel">Add zone multipliers to selected spaces</li>
    <li>Assign Building Stories</li>
    <li>Assign a Construction to the selected Subsurfaces</li>
    <li>Assign a Construction to the selected surfaces/subsurfaces</li>
    <li>Assign Building Story to Selected Spaces</li>
    <li>Change Shading Type</li>
    <li>Cleanup Origins</li>
    <li>Create Sketchup Layers for Space Groups</li>
    <li>Export Selected Spaces to a new External Model</li>
    <li>Find and replace string in Space Names<kbd>Shift+R</kbd></li>
    <li>Merge Spaces From External File</li>
    <li>Intersect Space Geometry</li>
    <li>Make Selected Surfaces Adiabatic and Assign a Construction</li>
    <li>Move Selected Surfaces to New Space</li>
    <li>Remove Hard Assigned Constructions</li>
    <li>Remove Loads Directly Assigned to Spaces</li>
    <li>Remove Orphan Photovoltaics</li>
    <li>Remove Orphan SubSurfaces</li>
    <li>Remove Photovoltaics</li>
    <li>Remove Unused ThermalZones</li>
    <li>Rename to Level:FacingSector/Int/Other:</li>
    <li>Rename Thermal Zones Based On Space Names</li>
    <li>Set Interior Partition Height Above Floor</li>
    <li>Set Shading Controls</li>
    <li>Set Window Property Frame and Divider</li>
    <li>Set Window to Wall Ratio</li>
  </ul>
</div>
</body>
</html>
```
FILE: styles.css
```css
* { box-sizing: border-box; }
html, body { margin: 0; overflow: hidden; }
body { width: 1520px; height: 855px; background: #f0f0f0; color: #000; font: 12px/16px "Open Sans", "Noto Sans", sans-serif; }
i { font-style: normal; }
.defs { position: absolute; }
.app { position: relative; width: 1520px; height: 855px; overflow: hidden; display: grid; grid-template-rows: 25px 39px 38px 753px; border-left: 1px solid #0c0c1e; box-shadow: inset 1px 0 #1d86d8; }

.menubar { display: flex; background: #fff; margin-left: 1px; padding-top: 6px; letter-spacing: -.2px; }
.mi { height: 18px; line-height: 19px; white-space: nowrap; }
.file { width: 39px; padding-left: 7px; }
.edit { width: 34px; }
.view { width: 39px; }
.camera { width: 55px; }
.draw { width: 41px; }
.tools { width: 42px; }
.window { width: 51px; }
.ext { width: 69px; height: 19px; line-height: 18px; padding-left: 6px; letter-spacing: -.45px; background: #cce8ff; border: 1px solid #99d1ff; }
.help { padding-left: 7px; }

.row { display: flex; margin-left: 1px; }
.bar { display: flex; align-items: center; border-right: 1px solid #a8a8a8; border-bottom: 1px solid #a8a8a8; background: #f1f1f2; padding-right: 1px; height: 39px; }
.row1 .bar:first-child { width: 818px; }
.row1 .bar:nth-child(2) { width: 360px; }
.row1 .bar:nth-child(3) { width: 114px; }
.row1 .bar:nth-child(n+2) .grip { margin-left: 4px; }
.grip { width: 3px; height: 33px; margin: 0 3px 0 4px; flex: none; background: repeating-linear-gradient(#aaa 0 2px, transparent 2px 4px); }
.ic { width: 34px; height: 34px; padding: 3px; flex: none; }
.ic.wide { padding: 0; }
.on { background: #c3dff5; border: 1px solid #92c8f5; padding: 2px; }
.sep { width: 8px; height: 30px; flex: none; background: linear-gradient(90deg, transparent 2px, #858585 2px 3px, transparent 3px); }
.hiddentools { width: 170px; flex: none; }
.idf { font: bold 10px Inter, sans-serif; fill: #fff; text-anchor: middle; }
.idf.small { font-size: 7.500px; }
.row2 { padding-left: 195px; }
.row2 .bar { height: 38px; width: 114px; }
.row2 .construction { margin-left: 50px; width: 473px; }

.main { display: flex; }
.palette { width: 73px; margin-left: 0; padding: 43px 0 0 3px; border-right: 1px solid #b4b4b4; border-left: 1px solid #1d86d8; }
.hgrip { display: block; width: 67px; height: 2px; background: repeating-linear-gradient(90deg, #aaa 0 2px, transparent 2px 4px); margin-bottom: 3px; }
.pgroup { width: 68px; display: grid; grid-template-columns: 34px 34px; grid-auto-rows: 34px; margin-bottom: 8px; box-shadow: 0 2px #f0f0f0, 0 3px #858585; margin-left: -1px; }
.pgroup:last-child { box-shadow: 0 2px #f0f0f0, 2px 3px #aaa; }

.viewport { position: relative; width: 1199px; border: solid #6a6a6a; border-width: 2px 1px 0 2px; background: linear-gradient(#7fcbff 0, #e3f2fb 147px, #9bbc92 147px); }
.scene { display: block; width: 1196px; height: 751px; fill: none; }
.console { position: absolute; left: 488px; top: 93px; width: 670px; height: 607px; background: #f0f0f0; border: 1px solid #858b8f; box-shadow: 0 3px 10px rgba(0,0,0,.4); display: flex; flex-direction: column; }
.ctitle { height: 30px; background: #fff; display: flex; align-items: center; gap: 5px; padding: 1px 8px 0; color: #999; letter-spacing: .1px; }
.cicon { width: 15px; height: 12px; border: 1px solid #aaa; background: linear-gradient(90deg, #4e8f65 50%, #ddd 50%); }
.cbody { flex: 1; padding: 10px; display: flex; flex-direction: column; gap: 11px; }
.cout { height: 504px; border: 1px solid #a0a0a0; border-top: 2px solid #696969; border-left: 2px solid #696969; }
.cin { height: 39px; background: #fff; border: 1px solid #a0a0a0; border-top: 2px solid #696969; border-left: 2px solid #696969; display: flex; justify-content: flex-end; padding-right: 5px; }

.tray { width: 237px; margin-left: 5px; flex: none; }
.traytitle { height: 19px; display: flex; justify-content: space-between; align-items: center; padding: 0 8px 0 4px; background: linear-gradient(#bfcdd9, #d3e2f1); letter-spacing: -.25px; }
.phead { height: 18px; margin-bottom: 1px; display: flex; align-items: center; padding: 0 3px 0 8px; background: linear-gradient(#e6e6e6, #b0b0b0); border-left: 1px solid #f8f8f8; color: #222; letter-spacing: .05px; }
.phead span { flex: 1; margin-left: 6px; }
.tri { width: 7px; height: 8px; background: #000; clip-path: polygon(0 0, 100% 50%, 0 100%); }
.tri.open { height: 7px; clip-path: polygon(0 0, 100% 0, 60% 100%, 40% 100%); }
.close { width: 13px; height: 13px; border: 1px solid #888; background: #e5e5e5; text-align: center; line-height: 11px; font-size: 12px; font-weight: bold; letter-spacing: 0; }
.entity { height: 180px; }
.nosel { margin: 0 2px; height: 25px; border-bottom: 1px solid #a0a0a0; display: flex; align-items: center; justify-content: space-between; padding: 2px 5px 0 7px; font-size: 11.500px; letter-spacing: -.2px; }
.ltools { height: 26px; display: flex; align-items: center; justify-content: space-between; padding: 0 5px 2px 6px; }
.lhead { display: flex; height: 17px; font-size: 11px; line-height: 15px; letter-spacing: -.35px; }
.lhead span { border: 1px solid #fff; border-right: 1px solid #606060; border-bottom: 1px solid #808080; padding-left: 4px; }
.lhead .c1 { width: 147px; }
.c1 svg { margin-left: 16px; }
.lhead .c2 { width: 50px; }
.lhead .c3 { width: 40px; }
.llist { height: 312px; background: #fff; padding: 2px 0 0 5px; }
.lrow { display: flex; align-items: center; height: 17px; font-size: 11.500px; letter-spacing: -.3px; }
.lrow span { margin-left: 3px; width: 148px; }
.check { margin-right: 30px; }
.swatch { width: 15px; height: 15px; background: #ff5757; }
.hscroll { height: 18px; display: flex; background: repeating-conic-gradient(#fff 0 25%, #ececec 0 50%) 0 0/2px 2px; }
.sbtn { width: 17px; background: #f0f0f0; border: 1px solid #fff; border-right-color: #696969; border-bottom-color: #696969; display: grid; place-items: center; }
.sbtn::before { content: ""; width: 4px; height: 8px; background: #000; clip-path: polygon(0 50%, 100% 0, 100% 100%); }
.sbtn.l { width: 16px; }
.sbtn.r::before { transform: scaleX(-1); }
.sbtn.r { margin-left: auto; }
.thumb { width: 108px; background: #f0f0f0; border: 1px solid #fff; border-right-color: #696969; border-bottom: 2px solid #777; }
.splitter { height: 5px; margin: 1px 0 2px; border: solid #b0b0b0; border-width: 1px 0; }
.utc { display: flex; align-items: center; height: 29px; padding: 2px 7px 5px 9px; }
.utc .combo { width: 109px; margin-left: 16px; margin-right: auto; }
.combo { height: 21px; background: #fff; border: 2px solid #777; border-right-color: #ddd; border-bottom-color: #ddd; display: flex; justify-content: space-between; line-height: 18px; font-family: "DejaVu Sans Condensed", "Noto Sans", sans-serif; font-size: 11.500px; padding-left: 1px; }
.drop { width: 16px; background: #f0f0f0; border: 1px solid #fff; border-right-color: #555; border-bottom-color: #555; display: grid; place-items: center; }
.drop::before { content: ""; width: 7px; height: 4px; background: #000; clip-path: polygon(0 0, 100% 0, 50% 100%); }
.srow { display: flex; height: 29px; padding: 4px 4px 0 2px; font-size: 11.500px; letter-spacing: -.3px; }
.srow label { width: 44px; margin-top: -1px; }
.srow.date { height: 27px; }
.slider { position: relative; width: 106px; height: 24px; }
.track { height: 8px; margin-top: 1px; border: 1px solid #aaa; border-top: 2px solid #777; }
.time { background: linear-gradient(90deg, #eef5fa, #84aacd 35%, #7585ff 65%, #536aff 72%, #050510); }
.year { background: linear-gradient(90deg, #fff6e0, #f4bd18 35%, #f50b00 72%, #ff8888 85%, #fff0f0); }
.knob { position: absolute; top: 1px; width: 4px; height: 13px; background: #f0f0f0; border-right: 1px solid #777; }
.k1 { left: 67px; }
.k2 { left: 87px; }
.ticks { display: flex; justify-content: space-between; font: 9.500px/14px "Liberation Sans", sans-serif; white-space: nowrap; letter-spacing: -.35px; }
.months { display: flex; justify-content: space-between; font: 10px/14px "Liberation Sans", sans-serif; padding-left: 5px; margin-right: -2px; }
.spin { width: 69px; margin-left: auto; flex: none; white-space: nowrap; font-size: 11px; letter-spacing: -.1px; }
.updown { width: 16px; display: grid; grid-template-rows: 1fr 1fr; }
.updown b { background: #f0f0f0; border: 1px solid #fff; border-right-color: #777; border-bottom-color: #777; display: grid; place-items: center; }
.updown b::before { content: ""; width: 5px; height: 2px; background: #000; clip-path: polygon(50% 0, 100% 100%, 0 100%); }
.updown b:last-child::before { transform: scaleY(-1); }
.gutter { width: 5px; padding: 4px 0 0 1px; background: linear-gradient(90deg, #f0f0f0 1px, #fafafa 1px); }
.redx { display: block; height: 12px; background: #cc4b50; }
.gthumb { display: block; height: 16px; margin-top: 21px; background: #cdcdcd; }

.menu { position: absolute; margin: 0; padding: 2px; list-style: none; background: #f1f1f1; border: 1px solid #ccc; box-shadow: 4px 4px 3px -1px rgba(0,0,0,.55); letter-spacing: -.29px; }
.menu li { height: 22px; line-height: 22px; padding-left: 32px; display: flex; justify-content: space-between; white-space: nowrap; }
.menu .sel { background: #91c9f7; }
.menu .rule { height: 7px; margin: 0 0 0 28px; padding: 0; background: linear-gradient(transparent 3px, #d5d5d5 3px 4px, transparent 4px); }
.sub::after { content: ""; width: 5px; height: 5px; border: solid #333; border-width: 1px 1px 0 0; transform: rotate(45deg); margin: 8px 10px 0 0; }
.m1 { left: 302px; top: 25px; width: 217px; height: 50px; }
.m2 { left: 513px; top: 47px; width: 266px; height: 167px; }
.m3 { left: 773px; top: 76px; width: 447px; height: 689px; }
.menu kbd { font: inherit; margin-right: 18px; letter-spacing: -.1px; }
```
